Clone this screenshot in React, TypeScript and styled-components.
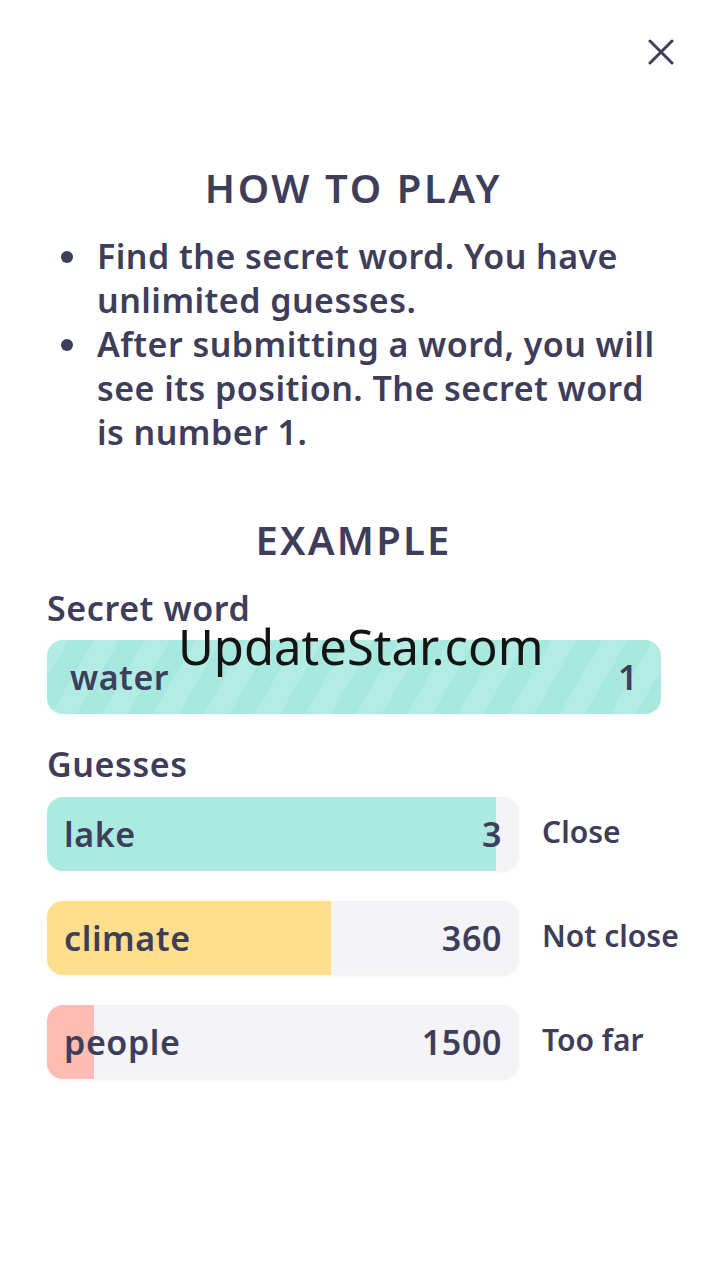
import React from "react";
import styled, { createGlobalStyle } from "styled-components";

const Global = createGlobalStyle`
  html, body { margin: 0; padding: 0; background: #ffffff; }
  body { font-family: "Noto Sans", "Open Sans", sans-serif; color: #3e3d5a; }
  * { box-sizing: border-box; }
`;

const Page = styled.div`
  position: relative;
  width: 720px;
  min-height: 1280px;
  background: #fff;
  padding: 34px 60px 0 47px;
`;

const TopBar = styled.div`
  display: flex;
  justify-content: flex-end;
  margin-right: -19px;
`;

const CloseButton = styled.button`
  width: 36px;
  height: 36px;
  border: none;
  background: transparent;
  padding: 0;
  display: flex;
  align-items: center;
  justify-content: center;
  color: #3e3d5a;
`;

const Title = styled.h1`
  margin: 96px 0 0 0;
  text-align: center;
  font-size: 40px;
  font-weight: 600;
  line-height: 44px;
  letter-spacing: 2.6px;
`;

const Rules = styled.ul`
  margin: 24px 0 0 0;
  padding: 0;
  list-style: none;
  display: flex;
  flex-direction: column;
`;

const Rule = styled.li`
  display: flex;
  align-items: flex-start;
  font-size: 34px;
  font-weight: 600;
  line-height: 44px;
  letter-spacing: 0.45px;
`;

const Dot = styled.span`
  flex: none;
  width: 12px;
  height: 12px;
  border-radius: 50%;
  background: #3e3d5a;
  margin: 17px 24px 0 14px;
`;

const SectionTitle = styled.h2`
  margin: 64px 0 0 0;
  text-align: center;
  font-size: 40px;
  font-weight: 600;
  line-height: 44px;
  letter-spacing: 2.2px;
`;

const Label = styled.div<{ $top: number }>`
  margin-top: ${(p) => p.$top}px;
  font-size: 34px;
  font-weight: 600;
  line-height: 30px;
  letter-spacing: 0.6px;
`;

const SecretBar = styled.div`
  margin-top: 17px;
  width: 614px;
  height: 74px;
  border-radius: 16px;
  background: repeating-linear-gradient(
    -60deg,
    #a8e9df 0px,
    #a8e9df 22px,
    #b2ece3 22px,
    #b2ece3 44px
  );
  display: flex;
  align-items: center;
  justify-content: space-between;
  padding: 0 23px 0 23px;
  font-size: 34px;
  font-weight: 600;
  letter-spacing: 0.5px;
  box-shadow: 0 1px 3px rgba(0, 0, 0, 0.05);
`;

const GuessList = styled.div`
  margin-top: 18px;
  display: flex;
  flex-direction: column;
  gap: 30px;
`;

const GuessRow = styled.div`
  display: flex;
  align-items: center;
  gap: 23px;
`;

const Track = styled.div`
  position: relative;
  flex: none;
  width: 472px;
  height: 74px;
  border-radius: 16px;
  background: #f4f4f6;
  overflow: hidden;
  box-shadow: 0 1px 3px rgba(0, 0, 0, 0.06);
`;

const Fill = styled.div<{ $color: string }>`
  position: absolute;
  left: 0;
  top: 0;
  bottom: 0;
  background: ${(p) => p.$color};
`;

const TrackContent = styled.div`
  position: relative;
  height: 100%;
  display: flex;
  align-items: center;
  justify-content: space-between;
  padding: 0 17px 0 17px;
  font-size: 34px;
  font-weight: 600;
  letter-spacing: 0.6px;
`;

const Verdict = styled.div`
  flex: none;
  white-space: nowrap;
  font-size: 30px;
  font-weight: 600;
  line-height: 36px;
  letter-spacing: 0px;
  margin-top: -4px;
`;

const Watermark = styled.div`
  position: absolute;
  left: 178px;
  top: 624px;
  font-family: "Noto Sans", sans-serif;
  font-size: 49px;
  line-height: 44px;
  font-weight: 400;
  color: #141414;
  pointer-events: none;
  white-space: nowrap;
`;

const guesses = [
  { word: "lake", rank: 3, fill: 449, color: "#abeae0", verdict: "Close" },
  { word: "climate", rank: 360, fill: 284, color: "#ffde8e", verdict: "Not close" },
  { word: "people", rank: 1500, fill: 47, color: "#ffbcb2", verdict: "Too far" },
];

export default function App() {
  return (
    <>
      <Global />
      <Page>
        <TopBar>
          <CloseButton aria-label="close">
            <svg width="26" height="26" viewBox="0 0 26 26">
              <path
                d="M2 2 L24 24 M24 2 L2 24"
                stroke="#3e3d5a"
                strokeWidth="3"
                strokeLinecap="round"
              />
            </svg>
          </CloseButton>
        </TopBar>
        <Title>HOW TO PLAY</Title>
        <Rules>
          <Rule>
            <Dot />
            <span>Find the secret word. You have unlimited guesses.</span>
          </Rule>
          <Rule>
            <Dot />
            <span>After submitting a word, you will see its position. The secret word is number 1.</span>
          </Rule>
        </Rules>
        <SectionTitle>EXAMPLE</SectionTitle>
        <Label $top={31}>Secret word</Label>
        <SecretBar>
          <span>water</span>
          <span>1</span>
        </SecretBar>
        <Label $top={35}>Guesses</Label>
        <GuessList>
          {guesses.map((g) => (
            <GuessRow key={g.word}>
              <Track>
                <Fill $color={g.color} style={{ width: g.fill }} />
                <TrackContent>
                  <span>{g.word}</span>
                  <span>{g.rank}</span>
                </TrackContent>
              </Track>
              <Verdict>{g.verdict}</Verdict>
            </GuessRow>
          ))}
        </GuessList>
        <Watermark>UpdateStar.com</Watermark>
      </Page>
    </>
  );
}
